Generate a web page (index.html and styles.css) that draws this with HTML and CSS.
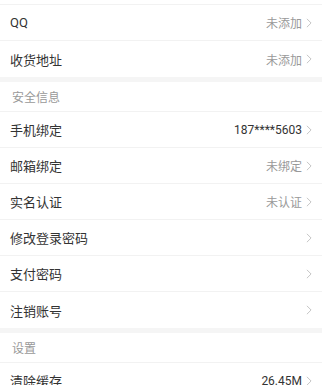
FILE: index.html
```html
<!DOCTYPE html>
<html lang="zh-CN">
<head>
    <meta charset="UTF-8">
    <meta name="viewport" content="width=device-width, initial-scale=1.0">
    <title>账号设置</title>
    <link rel="stylesheet" href="styles.css">
</head>
<body>
    <div class="page">
        <div class="group">
            <div class="cell">
                <span class="label">QQ</span>
                <span class="value">未添加</span>
                <svg class="arrow" viewBox="0 0 7 12"><path d="M1 1 L6 6 L1 11" /></svg>
            </div>
            <div class="cell last">
                <span class="label">收货地址</span>
                <span class="value">未添加</span>
                <svg class="arrow" viewBox="0 0 7 12"><path d="M1 1 L6 6 L1 11" /></svg>
            </div>
        </div>

        <div class="group">
            <div class="group-title">安全信息</div>
            <div class="cell">
                <span class="label">手机绑定</span>
                <span class="value dark">187****5603</span>
                <svg class="arrow" viewBox="0 0 7 12"><path d="M1 1 L6 6 L1 11" /></svg>
            </div>
            <div class="cell">
                <span class="label">邮箱绑定</span>
                <span class="value">未绑定</span>
                <svg class="arrow" viewBox="0 0 7 12"><path d="M1 1 L6 6 L1 11" /></svg>
            </div>
            <div class="cell">
                <span class="label">实名认证</span>
                <span class="value">未认证</span>
                <svg class="arrow" viewBox="0 0 7 12"><path d="M1 1 L6 6 L1 11" /></svg>
            </div>
            <div class="cell">
                <span class="label">修改登录密码</span>
                <span class="value"></span>
                <svg class="arrow" viewBox="0 0 7 12"><path d="M1 1 L6 6 L1 11" /></svg>
            </div>
            <div class="cell">
                <span class="label">支付密码</span>
                <span class="value"></span>
                <svg class="arrow" viewBox="0 0 7 12"><path d="M1 1 L6 6 L1 11" /></svg>
            </div>
            <div class="cell last">
                <span class="label">注销账号</span>
                <span class="value"></span>
                <svg class="arrow" viewBox="0 0 7 12"><path d="M1 1 L6 6 L1 11" /></svg>
            </div>
        </div>

        <div class="group">
            <div class="group-title">设置</div>
            <div class="cell">
                <span class="label">清除缓存</span>
                <span class="value dark">26.45M</span>
                <svg class="arrow" viewBox="0 0 7 12"><path d="M1 1 L6 6 L1 11" /></svg>
            </div>
        </div>
    </div>
</body>
</html>
```

FILE: styles.css
```css
* {
    margin: 0;
    padding: 0;
    box-sizing: border-box;
}

body {
    background: #f5f5f5;
    font-family: Roboto, "Noto Sans CJK SC", sans-serif;
    color: #333;
    overflow: hidden;
}

.page {
    padding-top: 4px;
    background: #fff;
}

.group {
    background: #fff;
    border-top: 1px solid #f2f2f2;
}

.group + .group {
    border-top: 5px solid #f5f5f5;
}

.group-title {
    height: 30px;
    padding: 0 12px;
    display: flex;
    align-items: center;
    font-size: 12px;
    color: #999;
    border-bottom: 1px solid #f2f2f2;
}

.cell {
    height: 36px;
    padding: 0 10px;
    display: flex;
    align-items: center;
    border-bottom: 1px solid #f2f2f2;
}

.cell.last {
    border-bottom: none;
}

.label {
    flex: 1;
    font-size: 13px;
    color: #333;
}

.value {
    font-size: 12px;
    color: #999;
    margin-right: 4px;
}

.value.dark {
    color: #333;
}

.arrow {
    width: 6px;
    height: 10px;
    fill: none;
    stroke: #bbb;
    stroke-width: 1;
}
```
